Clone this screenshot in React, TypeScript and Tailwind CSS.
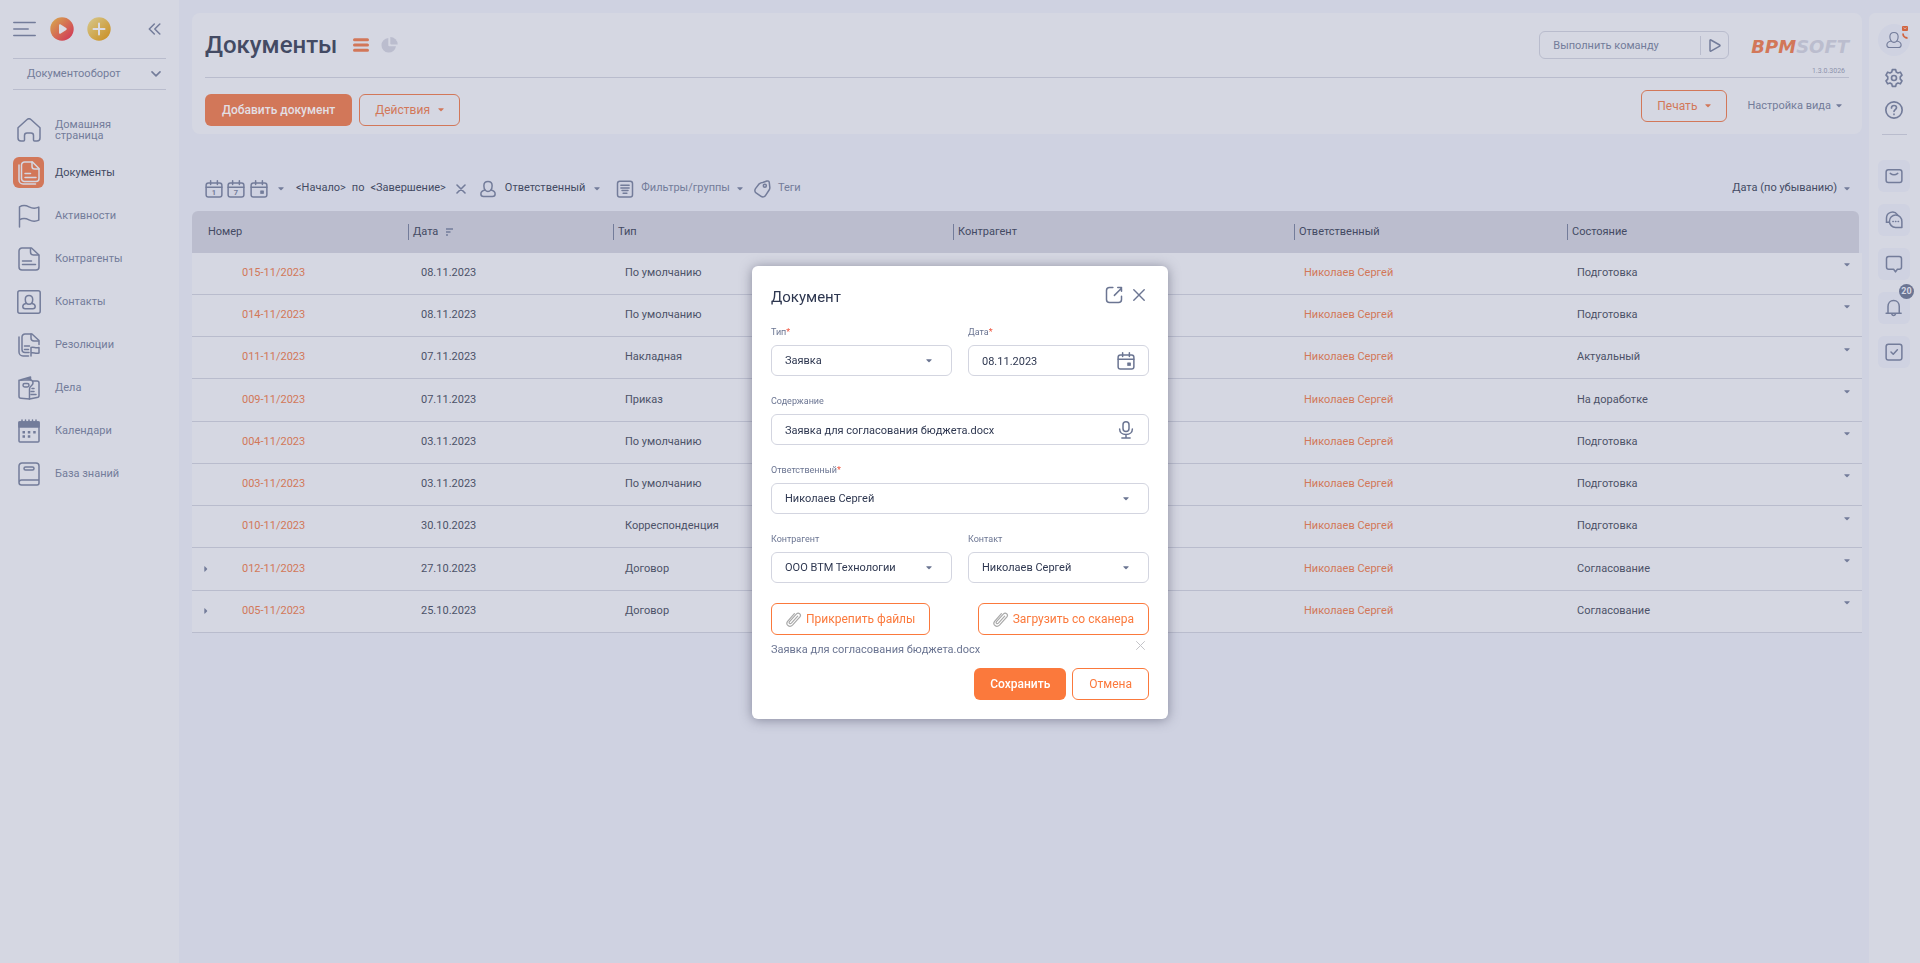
import type { ReactNode } from "react";
import clsx from "clsx";

interface DocumentRow {
    number: string,
    date: string,
    type: string,
    state: string,
    expandable?: boolean
}

const documents: DocumentRow[] = [
    { number: "015-11/2023", date: "08.11.2023", type: "По умолчанию", state: "Подготовка" },
    { number: "014-11/2023", date: "08.11.2023", type: "По умолчанию", state: "Подготовка" },
    { number: "011-11/2023", date: "07.11.2023", type: "Накладная", state: "Актуальный" },
    { number: "009-11/2023", date: "07.11.2023", type: "Приказ", state: "На доработке" },
    { number: "004-11/2023", date: "03.11.2023", type: "По умолчанию", state: "Подготовка" },
    { number: "003-11/2023", date: "03.11.2023", type: "По умолчанию", state: "Подготовка" },
    { number: "010-11/2023", date: "30.10.2023", type: "Корреспонденция", state: "Подготовка" },
    { number: "012-11/2023", date: "27.10.2023", type: "Договор", state: "Согласование", expandable: true },
    { number: "005-11/2023", date: "25.10.2023", type: "Договор", state: "Согласование", expandable: true },
];

interface IconProps {
    children: ReactNode,
    size?: number,
    className?: string
}

function Icon({ children, size = 24, className }: IconProps) {
    return (
        <svg
            width={size}
            height={size}
            viewBox="0 0 24 24"
            fill="none"
            stroke="currentColor"
            strokeWidth="1.5"
            strokeLinecap="round"
            strokeLinejoin="round"
            className={clsx("shrink-0", className)}
            aria-hidden="true">
            {children}
        </svg>
    );
}

function Caret({ className }: { className?: string }) {
    return (
        <svg width="6" height="4" viewBox="0 0 6 4" fill="currentColor" className={clsx("shrink-0", className)} aria-hidden="true">
            <path d="M.8.3h4.400c.5 0 .6.4.3.7L3.500 3a.7.7 0 0 1-1 0L.5 1C.2.7.3.3.8.3Z" />
        </svg>
    );
}

function CalendarIcon({ mark, size = 18 }: { mark?: string, size?: number }) {
    return (
        <Icon size={size}>
            <rect x="1.500" y="4" width="21" height="18.500" rx="3" strokeWidth="2" />
            <path d="M1.500 9.500h21M7.500 1v5M16.500 1v5" strokeWidth="2" />
            {mark
                ? <text x="12" y="20" textAnchor="middle" fontSize="10" fontWeight="700" fill="currentColor" stroke="none">{mark}</text>
                : <rect x="14.500" y="14.500" width="3.500" height="3.500" fill="currentColor" strokeWidth="1" />
            }
        </Icon>
    );
}

function PersonShape() {
    return (
        <>
            <path d="M12 2c-3.400 0-5.500 2.300-5.500 5.600 0 2.200.5 4.400 1.800 5.900.9 1.100 2.200 1.700 3.700 1.700s2.800-.6 3.700-1.700c1.300-1.500 1.800-3.700 1.800-5.900C17.500 4.300 15.400 2 12 2Z" />
            <path d="M8 13.300C4.800 14 2.500 15.900 2.500 18.600c0 2 1.400 3.400 3.500 3.400h12c2.100 0 3.500-1.400 3.500-3.400 0-2.700-2.300-4.600-5.500-5.300" />
        </>
    );
}

const menu = [
    {
        title: "Домашняя страница",
        icon: <path d="M1 9.800 9.800 1.700a3.200 3.200 0 0 1 4.400 0L23 9.800V20a3 3 0 0 1-3 3h-2.500a1 1 0 0 1-1-1v-4.500a2.500 2.500 0 0 0-2.500-2.500h-4a2.500 2.500 0 0 0-2.500 2.500V22a1 1 0 0 1-1 1H4a3 3 0 0 1-3-3Z" />
    },
    {
        title: "Документы",
        active: true,
        icon: <>
            <path d="M7.500 1h8l6.500 6.500v10a3 3 0 0 1-3 3H7.500a3 3 0 0 1-3-3V4a3 3 0 0 1 3-3Z" />
            <path d="M15 1v4.500A2.500 2.500 0 0 0 17.500 8H22M8 12.500h5.500M8 16.500h11" />
            <path d="M2 4v15a4 4 0 0 0 4 4h12.500" />
        </>
    },
    {
        title: "Активности",
        icon: <path d="M2.500 23V2.800C5.500 1 8.500 1 12 2.800s6.500 1.800 9.800.3v13c-3.300 1.500-6.300 1.500-9.800-.3s-6.500-1.800-9.500 0" />
    },
    {
        title: "Контрагенты",
        icon: <>
            <path d="M5 1h9.500L22 8v12a3 3 0 0 1-3 3H5a3 3 0 0 1-3-3V4a3 3 0 0 1 3-3Z" />
            <path d="M13.500 1.500V5A3 3 0 0 0 16.500 8H21.500M5.500 14h9M5.500 17.500h13" />
        </>
    },
    {
        title: "Контакты",
        icon: <>
            <rect x=".8" y=".8" width="22.400" height="22.400" rx="2" />
            <path d="M12 5.500c-2.300 0-3.700 1.600-3.700 3.900 0 2.500 1.200 4.800 3.700 4.800s3.700-2.300 3.700-4.800c0-2.300-1.400-3.900-3.700-3.900Z" />
            <path d="M9 13.500c-2 .4-3.200 1.500-3.200 3 0 1.400 1 2.200 2.300 2.200h7.800c1.300 0 2.300-.8 2.300-2.200 0-1.500-1.200-2.600-3.200-3" />
        </>
    },
    {
        title: "Резолюции",
        icon: <>
            <path d="M12 19.500H8a3 3 0 0 1-3-3V4a3 3 0 0 1 3-3h7l7 6.500v4" />
            <path d="M14 1v4a3 3 0 0 0 3 3h4.500M7.500 13h5M7.500 16.500h4M2 4v15a4 4 0 0 0 4 4h5.500" />
            <path d="M14 23v-8.500c2.500-.8 4.500.8 8 0V20c-3.500.8-5.500-.8-8 0" />
        </>
    },
    {
        title: "Дела",
        icon: <>
            <path d="M2 4.200 12.500 3.800c3 .2 3.500 1.200 3.500 3.200 0 3-3.500 2.500-3.500 6V23L4 22.300a2 2 0 0 1-2-2Z" />
            <path d="M4 3.800 13.500 1v3M16 5h4a2 2 0 0 1 2 2v12.500a2 2 0 0 1-2 2L12.500 23M14 15.500h3M14 18.500h5M15 12.500h2" />
            <rect x="6" y="7.500" width="6" height="3.500" rx="1.700" />
        </>
    },
    {
        title: "Календари",
        icon: <>
            <rect x="2" y="3" width="20" height="20" rx="1" />
            <path d="M2 3h20v5H2ZM5 1v2M8.500 1v2M12 1v2M15.500 1v2M19 1v2" fill="currentColor" />
            <path d="M5.500 13.300h2.500M10.800 13.300h2.500M16.200 13.300h2.500M5.500 17.500h2.500M10.800 17.500h2.500" strokeWidth="2.400" strokeLinecap="butt" />
        </>
    },
    {
        title: "База знаний",
        icon: <>
            <path d="M5 1h14a3 3 0 0 1 3 3v17a2 2 0 0 1-2 2H4.500A2.500 2.500 0 0 1 2 20.500V4a3 3 0 0 1 3-3ZM2 20.500A2.500 2.500 0 0 1 4.500 18H22" />
            <rect x="7" y="5" width="10" height="3" rx="1.500" />
        </>
    },
];

function Sidebar() {
    return (
        <nav className="w-[179px] shrink-0 bg-[#d5d7e2] px-[13px]">
            <div className="flex h-[58px] items-center">
                <button aria-label="Меню">
                    <svg width="23" height="16" viewBox="0 0 23 16" fill="none" stroke="currentColor" strokeWidth="1.5" strokeLinecap="round">
                        <path d="M.8 1.500h21.400M.8 8h14.400M.8 14.500h21.400" />
                    </svg>
                </button>
                <button aria-label="Запустить процесс" className="ml-[14px]">
                    <svg width="24" height="24" viewBox="0 0 24 24">
                        <defs>
                            <linearGradient id="run" x1="0" y1="0" x2="1" y2="1">
                                <stop offset=".1" stopColor="#d7a04f" />
                                <stop offset=".9" stopColor="#d13a57" />
                            </linearGradient>
                        </defs>
                        <circle cx="12" cy="12" r="11.700" fill="url(#run)" />
                        <path d="M9 8.300v7.400c0 1 .9 1.400 1.700.9l5.500-3.700c.7-.5.7-1.300 0-1.800l-5.500-3.700c-.8-.5-1.700-.1-1.700.9Z" fill="#dadbe4" />
                    </svg>
                </button>
                <button aria-label="Создать" className="ml-[13px]">
                    <svg width="24" height="24" viewBox="0 0 24 24">
                        <defs>
                            <linearGradient id="add" x1="0" y1="0" x2="1" y2="1">
                                <stop offset=".1" stopColor="#d5c383" />
                                <stop offset=".9" stopColor="#cb9228" />
                            </linearGradient>
                        </defs>
                        <circle cx="12" cy="12" r="11.700" fill="url(#add)" />
                        <path d="M12 6.500v11M6.500 12h11" stroke="#dadbe4" strokeWidth="2" strokeLinecap="round" />
                    </svg>
                </button>
                <button aria-label="Свернуть панель" className="mr-[5px] ml-auto">
                    <svg width="13" height="12" viewBox="0 0 13 12" fill="none" stroke="currentColor" strokeWidth="1.500" strokeLinecap="round" strokeLinejoin="round">
                        <path d="M6.300 1 1.300 6l5 5M11.800 1l-5 5 5 5" />
                    </svg>
                </button>
            </div>
            <button className="flex h-8 w-full items-center justify-between border-y border-[#b9bccd] pr-[5px] pl-[14px]">
                Документооборот
                <svg width="10" height="6" viewBox="0 0 10 6" fill="none" stroke="currentColor" strokeWidth="1.600" strokeLinecap="round" strokeLinejoin="round">
                    <path d="m1 .9 4 4 4-4" />
                </svg>
            </button>
            <ul className="mt-[18px]">
                { menu.map(item =>
                    <li key={item.title}>
                        <a href="#" className={clsx("flex h-[43px] items-center gap-[11px]", item.active && "text-[#434a63]")}>
                            <span className={clsx("flex size-[31px] items-center justify-center rounded-md", item.active && "bg-[#d27759] text-[#d5d7e2]")}>
                                <Icon>{item.icon}</Icon>
                            </span>
                            <span className="w-20 leading-[11px]">{item.title}</span>
                        </a>
                    </li>
                ) }
            </ul>
        </nav>
    );
}

function PageHeader() {
    return (
        <header className="rounded-lg bg-[#d5d7e2] px-[13px]">
            <div className="flex h-[65px] items-center border-b border-[#b9bccd]">
                <h1 className="text-2xl font-medium text-[#434a63]">Документы</h1>
                <button aria-label="Список" className="ml-4 text-[#d27759]">
                    <svg width="16" height="14" viewBox="0 0 16 14" stroke="currentColor" strokeWidth="3" strokeLinecap="round">
                        <path d="M1.500 1.700h13M1.500 7h13M1.500 12.300h13" />
                    </svg>
                </button>
                <button aria-label="Аналитика" className="ml-3 text-[#bbbdce]">
                    <svg width="17" height="16" viewBox="0 0 17 16" fill="currentColor">
                        <path d="M7.300 1A7.300 7.300 0 1 0 15 9.300H8.300a1 1 0 0 1-1-1Z" />
                        <path d="M9.300 0v6.500a1 1 0 0 0 1 1h6.400A7.600 7.600 0 0 0 9.300 0Z" />
                    </svg>
                </button>
                <div className="ml-auto flex h-7 w-[190px] items-center rounded-md border border-[#b9bccd]">
                    <input
                        aria-label="Выполнить команду"
                        placeholder="Выполнить команду"
                        className="h-full min-w-0 grow bg-transparent pl-[13px] outline-none placeholder:text-[#737c9a]" />
                    <button aria-label="Выполнить" className="flex h-[19px] w-7 items-center justify-center border-l border-[#b9bccd]">
                        <svg width="12" height="13" viewBox="0 0 12 13" fill="none" stroke="currentColor" strokeWidth="1.500" strokeLinejoin="round">
                            <path d="M1 1.500v10c0 .5.500.8.900.6l8.800-5c.4-.2.400-.9 0-1.100l-8.800-5C1.500.7 1 1 1 1.500Z" />
                        </svg>
                    </button>
                </div>
                <div className="ml-[22px] flex h-full flex-col items-end justify-end">
                    <a href="#" className="font-['DejaVu_Sans',sans-serif] text-lg leading-5 font-bold text-[#bbbdce] italic">
                        <span className="text-[#d27759]">BPM</span>SOFT
                    </a>
                    <span className="mt-[10px] mr-1 mb-px text-[7px] leading-[9px] text-[#8d93ac]">1.3.0.3026</span>
                </div>
            </div>
            <div className="flex h-14 items-start">
                <button className="mt-4 h-8 rounded-md bg-[#d27759] px-[17px] text-xs font-medium text-[#e3dfe4]">Добавить документ</button>
                <button className="mt-4 ml-[7px] flex h-8 items-center gap-2 rounded-md border border-[#d27759] px-[15px] text-xs text-[#d27759]">
                    Действия <Caret />
                </button>
                <button className="mt-3 ml-auto flex h-8 items-center gap-2 rounded-md border border-[#d27759] px-[15px] text-xs text-[#d27759]">
                    Печать <Caret />
                </button>
                <button className="mt-3 mr-[7px] ml-5 flex h-8 items-center gap-[5px]">
                    Настройка вида <Caret />
                </button>
            </div>
        </header>
    );
}

function Filters() {
    return (
        <div className="mt-[39px] mb-[7px] flex h-[31px] items-center pr-3 pl-[13px]">
            <div className="flex items-center gap-1">
                <button aria-label="Сегодня"><CalendarIcon mark="1" /></button>
                <button aria-label="Неделя"><CalendarIcon mark="7" /></button>
                <button aria-label="Месяц" className="ml-px"><CalendarIcon /></button>
            </div>
            <button aria-label="Период" className="ml-[10px]"><Caret /></button>
            <div className="ml-3 flex items-center gap-[6px] text-[#434a63]">
                <button>&lt;Начало&gt;</button>
                <span>по</span>
                <button>&lt;Завершение&gt;</button>
            </div>
            <button aria-label="Очистить период" className="ml-[10px]">
                <svg width="10" height="10" viewBox="0 0 10 10" stroke="currentColor" strokeWidth="1.600" strokeLinecap="round">
                    <path d="m1 1 8 8M9 1 1 9" />
                </svg>
            </button>
            <button className="ml-[13px] flex items-center gap-2 text-[#434a63]">
                <Icon size={18} className="text-[#737c9a] [stroke-width:2]"><PersonShape /></Icon>
                Ответственный
                <Caret className="ml-px text-[#737c9a]" />
            </button>
            <button className="ml-4 flex items-center gap-[7px]">
                <Icon size={18} className="[stroke-width:2]">
                    <rect x="2" y="1.500" width="20" height="21" rx="3" />
                    <path d="M6.500 7h11M6.500 10.500h11M8 14h8M9.500 17.500h5" />
                </Icon>
                Фильтры/группы
                <Caret />
            </button>
            <button className="ml-[10px] flex items-center gap-[7px]">
                <Icon size={18} className="[stroke-width:2]">
                    <path d="M13 3.300 18.500 1.400c1.700-.6 3 .4 3.200 2l.7 6c.2 1.400-.1 2.700-.9 3.900l-4.700 7.200c-1.400 2.200-3.900 2.700-6 1.300l-6.300-4.200c-2.200-1.400-2.600-4-1.200-6.100l5-6.400A9 9 0 0 1 13 3.300Z" />
                    <circle cx="15.800" cy="7.500" r="2" />
                </Icon>
                Теги
            </button>
            <button className="ml-auto flex items-center gap-[7px] text-[#434a63]">
                Дата (по убыванию)
                <Caret className="text-[#737c9a]" />
            </button>
        </div>
    );
}

function DocumentsTable() {
    return (
        <table className="h-[422px] w-full table-fixed border-collapse text-left text-[#4c5268]">
            <colgroup>
                <col className="w-[216px]" />
                <col className="w-[205px]" />
                <col className="w-[340px]" />
                <col className="w-[341px]" />
                <col className="w-[273px]" />
                <col className="w-[295px]" />
            </colgroup>
            <thead className="text-[#434a63]">
                <tr className="h-[42px]">
                    { ["Номер", "Дата", "Тип", "Контрагент", "Ответственный", "Состояние"].map((title, index) =>
                        <th key={title} className="p-0 font-normal last:pr-[3px]">
                            <div className={clsx(
                                "flex h-[42px] items-center bg-[#bbbdce]",
                                index === 0 && "rounded-tl-md pl-4",
                                index === 5 && "rounded-tr-md"
                            )}>
                                <span className={clsx("flex h-4 items-center gap-2", index > 0 && "border-l border-[#737c9a] pl-1")}>
                                    {title}
                                    { index === 1 &&
                                        <svg width="7" height="8" viewBox="0 0 7 8" stroke="#737c9a" strokeWidth="1.400" aria-hidden="true">
                                            <path d="M0 1h7M0 4h4.500M0 7h2" />
                                        </svg>
                                    }
                                </span>
                            </div>
                        </th>
                    ) }
                </tr>
            </thead>
            <tbody>
                { documents.map(row =>
                    <tr key={row.number} className="border-b border-[#b9bccd] bg-[#d5d7e2]">
                        <td className="p-0">
                            <div className="flex items-center">
                                <span className="flex w-[50px] pl-[11px] text-[#737c9a]">
                                    { row.expandable &&
                                        <button aria-label="Развернуть">
                                            <Caret className="-rotate-90" />
                                        </button>
                                    }
                                </span>
                                <a href="#" className="text-[#d27759]">{row.number}</a>
                            </div>
                        </td>
                        <td className="p-0 pl-[13px]">{row.date}</td>
                        <td className="p-0 pl-3">{row.type}</td>
                        <td className="p-0"></td>
                        <td className="p-0 pl-[10px]"><a href="#" className="text-[#d27759]">Николаев Сергей</a></td>
                        <td className="p-0 pr-3 pl-[10px]">
                            <div className="flex items-center justify-between">
                                {row.state}
                                <button aria-label="Действия с записью" className="pb-4 text-[#737c9a]"><Caret /></button>
                            </div>
                        </td>
                    </tr>
                ) }
            </tbody>
        </table>
    );
}

interface PanelButtonProps {
    label: string,
    children: ReactNode
}

function PanelButton({ label, children }: PanelButtonProps) {
    return (
        <button aria-label={label} className="flex size-8 items-center justify-center rounded-md bg-[#cfd2e1]">
            <Icon size={18} className="[stroke-width:2]">{children}</Icon>
        </button>
    );
}

function CommunicationPanel() {
    return (
        <aside className="mt-[13px] ml-[7px] flex w-[51px] shrink-0 flex-col items-center rounded-tl-md bg-[#d5d7e2] pt-[11px] pr-px">
            <button aria-label="Профиль" className="relative flex size-8 items-center justify-center rounded-full bg-[#cfd2e1]">
                <Icon size={18}><PersonShape /></Icon>
                <span className="absolute top-[2px] right-[2px] flex flex-col gap-[2px] text-[#d2643f]">
                    <svg width="6" height="5" viewBox="0 0 6 5">
                        <rect width="6" height="5" rx="1" fill="currentColor" />
                        <path d="m1.500 1.700 1.500 1 1.500-1" stroke="#d5d7e2" strokeWidth=".7" fill="none" />
                    </svg>
                    <svg width="6" height="6" viewBox="0 0 6 6" fill="none" stroke="currentColor" strokeWidth="1.800">
                        <path d="M1 .5C1 3 3 5 5.500 5" />
                    </svg>
                </span>
            </button>
            <button aria-label="Настройки" className="mt-3">
                <Icon size={20} className="[stroke-width:2]">
                    <path d="M10 2h4l.7 2.900 2 1.100 2.900-1 2 3.500-2.100 2.200v2.600l2.100 2.200-2 3.500-2.900-1-2 1.100L14 22h-4l-.7-2.900-2-1.100-2.900 1-2-3.500 2.100-2.200v-2.600L2.400 8.500l2-3.500 2.900 1 2-1.100Z" />
                    <circle cx="12" cy="12" r="3" />
                </Icon>
            </button>
            <button aria-label="Справка" className="mt-3">
                <Icon size={20} className="[stroke-width:2]">
                    <circle cx="12" cy="12" r="9.800" />
                    <path d="M9 9.500c0-1.800 1.300-2.900 3-2.900s3 1.100 3 2.700c0 2.200-3 2.300-3 4.500M12 17v.3" />
                </Icon>
            </button>
            <hr className="mt-[14px] mb-[25px] w-[25px] border-[#b9bccd]" />
            <div className="flex flex-col gap-3">
                <PanelButton label="Почта">
                    <rect x="1.500" y="3.500" width="21" height="17" rx="3" />
                    <path d="M7 8.500c3.300 2.500 6.700 2.500 10 0" />
                </PanelButton>
                <PanelButton label="Чаты">
                    <path d="M2 15V9.500a8 8 0 0 1 14.500-4.700" />
                    <path d="M2 15h3.500" />
                    <path d="M22.500 22V14a8.300 8.300 0 1 0-8.300 8Z" />
                    <path d="M10.500 14h.5M14 14h.5M17.500 14h.5" />
                </PanelButton>
                <PanelButton label="Лента">
                    <path d="M5 2h14a3 3 0 0 1 3 3v11a3 3 0 0 1-3 3h-2.500L14 22.500 11.500 19H5a3 3 0 0 1-3-3V5a3 3 0 0 1 3-3Z" />
                </PanelButton>
                <div className="relative">
                    <PanelButton label="Уведомления">
                        <path d="M1.500 19h20M4 19v-9c0-4.500 3-8 7.500-8s7.500 3.500 7.500 8v9M9 20c.5 1.500 1.500 2 2.500 2s2-.5 2.500-2" />
                    </PanelButton>
                    <span className="absolute -top-2 -right-1 flex size-[15px] items-center justify-center rounded-full bg-[#6b7592] text-[9px] font-bold text-[#d5d7e2]">20</span>
                </div>
                <PanelButton label="Задачи">
                    <rect x="1.500" y="1.500" width="21" height="21" rx="3" />
                    <path d="m8 12 3 3 5.500-6" />
                </PanelButton>
            </div>
        </aside>
    );
}

interface FieldProps {
    id: string,
    label: string,
    value: string,
    required?: boolean,
    wide?: boolean,
    icon?: ReactNode
}

function Field({ id, label, value, required, wide, icon }: FieldProps) {
    const control = "h-[31px] w-full appearance-none rounded-md border border-[#d3d5e0] bg-white pt-[2px] pl-[13px] text-[#2e3750] outline-none";

    return (
        <div className={clsx(wide && "col-span-2")}>
            <label htmlFor={id} className="mb-[6px] block text-[9px] leading-[14px] text-[#6b7592]">
                {label}{ required && <span className="text-[#f0553f]">*</span> }
            </label>
            <div className="relative">
                { icon
                    ? <input id={id} defaultValue={value} className={clsx(control, "pr-10")} />
                    : <select id={id} defaultValue={value} className={clsx(control, "pr-8")}><option>{value}</option></select>
                }
                <span className={clsx("pointer-events-none absolute inset-y-0 flex items-center", icon ? "right-[14px]" : "right-5")}>
                    {icon || <Caret />}
                </span>
            </div>
        </div>
    );
}

function Paperclip() {
    return (
        <svg width="16" height="17" viewBox="0 0 16 17" fill="none" stroke="#a9a9a9" strokeWidth="1.200" strokeLinecap="round" aria-hidden="true">
            <path d="m11.700 5.200-6.300 7c-1.300 1.300-3-.2-1.900-1.600l7-7.700c2-2 5.200.4 3.400 2.900l-7.400 8.300c-3 2.900-7.300-.4-4.900-3.800l6.800-7.700" />
        </svg>
    );
}

function DocumentDialog() {
    const outlined = "h-8 rounded-md border border-[#fb793c] bg-white text-xs text-[#fb793c]";

    return (
        <div className="fixed inset-0 flex items-start justify-center pt-[266px]">
            <div
                role="dialog"
                aria-labelledby="dialog-title"
                className="w-[416px] rounded-md bg-white px-[19px] pb-[19px] text-[#6b7592] shadow-[0_1px_12px_rgba(60,62,85,0.5)]">
                <div className="flex h-[59px] items-center pt-1">
                    <h2 id="dialog-title" className="grow text-[15px] text-[#2e3750]">Документ</h2>
                    <button aria-label="Открыть в новой вкладке" className="pb-[6px]">
                        <Icon size={18} className="[stroke-width:2]">
                            <path d="M10.500 2H6a4 4 0 0 0-4 4v12a4 4 0 0 0 4 4h12a4 4 0 0 0 4-4v-4.500M12.500 12.500 22 3M17 2h5v5" />
                        </Icon>
                    </button>
                    <button aria-label="Закрыть" className="mr-1 ml-[10px] pb-[6px]">
                        <svg width="12" height="12" viewBox="0 0 12 12" stroke="currentColor" strokeWidth="1.400" strokeLinecap="round">
                            <path d="m.8.8 10.400 10.400M11.200.8.800 11.200" />
                        </svg>
                    </button>
                </div>
                <form className="grid grid-cols-2 gap-x-4 gap-y-[18px]">
                    <Field id="type" label="Тип" value="Заявка" required />
                    <Field id="date" label="Дата" value="08.11.2023" required icon={<CalendarIcon />} />
                    <Field id="subject" label="Содержание" value="Заявка для согласования бюджета.docx" wide icon={
                        <Icon size={18} className="[stroke-width:2]">
                            <rect x="8" y="1" width="8" height="13" rx="4" />
                            <path d="M3.500 10.500c0 4.500 3.500 7.500 8.500 7.500s8.500-3 8.500-7.500M12 18v4.500M6.500 22.800h11" />
                        </Icon>
                    } />
                    <Field id="owner" label="Ответственный" value="Николаев Сергей" required wide />
                    <Field id="account" label="Контрагент" value="ООО ВТМ Технологии" />
                    <Field id="contact" label="Контакт" value="Николаев Сергей" />
                </form>
                <div className="mt-5 flex justify-between">
                    <button className={clsx(outlined, "flex items-center gap-1 px-[14px]")}><Paperclip />Прикрепить файлы</button>
                    <button className={clsx(outlined, "flex items-center gap-1 px-[14px]")}><Paperclip />Загрузить со сканера</button>
                </div>
                <div className="flex h-[33px] items-center justify-between pr-1 pb-[2px]">
                    <a href="#">Заявка для согласования бюджета.docx</a>
                    <button aria-label="Удалить файл" className="pb-[10px] text-[#c4c4c8]">
                        <svg width="9" height="9" viewBox="0 0 9 9" stroke="currentColor" strokeLinecap="round">
                            <path d="m.5.5 8 8M8.500.5l-8 8" />
                        </svg>
                    </button>
                </div>
                <div className="flex justify-end gap-[6px]">
                    <button className="h-8 rounded-md bg-[#fb793c] px-4 text-xs font-medium text-white">Сохранить</button>
                    <button className={clsx(outlined, "px-4")}>Отмена</button>
                </div>
            </div>
        </div>
    );
}

export default function App() {
    return (
        <div className="flex min-h-screen bg-[#cfd2e1] font-[Roboto,sans-serif] text-[11px] text-[#737c9a]">
            <Sidebar />
            <main className="min-w-0 grow pt-[13px] pl-[13px]">
                <PageHeader />
                <Filters />
                <DocumentsTable />
            </main>
            <CommunicationPanel />
            <DocumentDialog />
        </div>
    );
}
